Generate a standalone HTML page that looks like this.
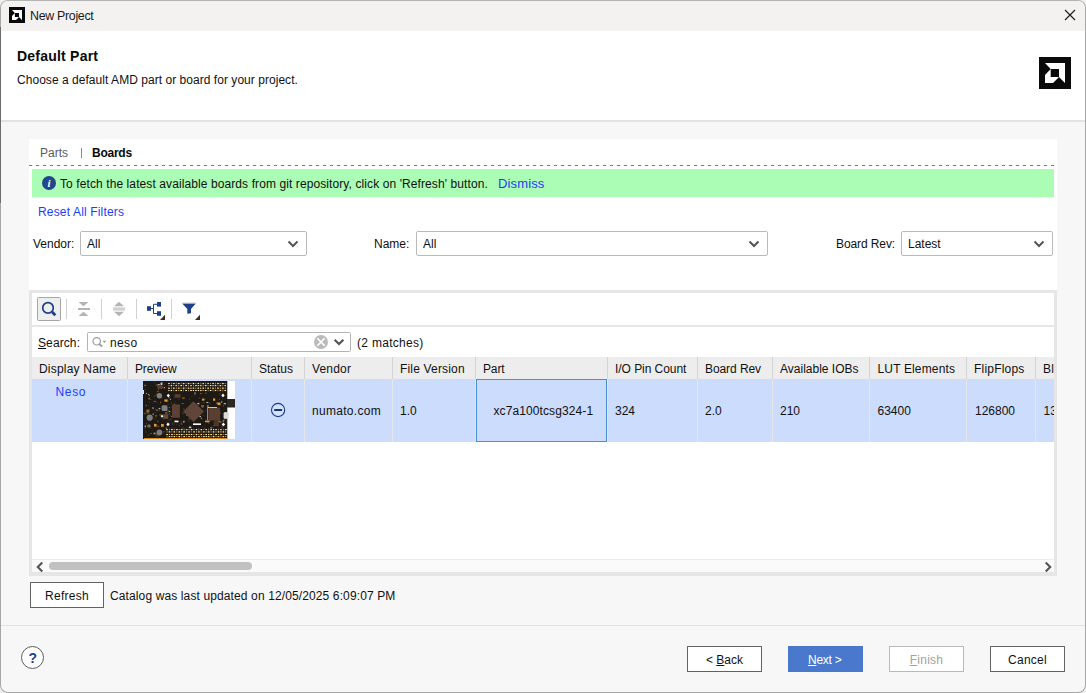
<!DOCTYPE html>
<html lang="en">
<head>
<meta charset="utf-8">
<title>New Project</title>
<style>
html,body{margin:0;padding:0;}
body{width:1086px;height:693px;overflow:hidden;background:#f0f0f0;font-family:"Liberation Sans",sans-serif;font-size:12px;color:#111;}
#win{position:absolute;left:0;top:0;width:1084px;height:691px;border:1px solid #a6a6a6;border-top-color:#b4b4b4;border-radius:8px;background:#f7f7f7;overflow:hidden;}
/* everything inside #win is positioned relative to (1,1); use .abs with page coords minus 1 via wrapper */
#page{position:absolute;left:-1px;top:-1px;width:1086px;height:693px;}
.abs{position:absolute;}
.t{position:absolute;white-space:pre;line-height:14px;height:14px;}
.b{font-weight:bold;}
.link{color:#1b41f8;}
.combo{position:absolute;top:231px;height:23px;border:1px solid #bababa;border-radius:2px;background:#fff;}
.combo .t{left:6px;top:5px;}
.combo svg{position:absolute;right:7px;top:8px;}
.btn{position:absolute;height:24px;border:1px solid #636363;background:#fff;text-align:center;line-height:26px;white-space:pre;overflow:hidden;}
.hd{position:absolute;top:357px;height:22px;background:#ededed;}
.vs{position:absolute;width:1px;background:#d4d4d4;top:357px;height:22px;}
.vr{position:absolute;width:1px;background:#e4e6ea;top:379px;height:63px;}
.tsep{position:absolute;width:1px;background:#d0d0d0;top:299px;height:20px;}
u{text-decoration:underline;text-underline-offset:1px;}
</style>
</head>
<body>
<div id="win"><div id="page">

<!-- title bar -->
<div class="abs" style="left:1px;top:1px;width:1084px;height:30px;background:#f3f2f1;"></div>
<svg class="abs" style="left:9px;top:7px" width="16" height="16" viewBox="0 0 32 32"><rect width="32" height="32" fill="#0a0a0a"/><path d="M6 6H26V26L20 20V12H11.7ZM6 18L11.7 12V20H20L14 26H6Z" fill="#fff"/></svg>
<div class="t" style="left:30px;top:9px;font-size:12.4px;letter-spacing:-0.3px;color:#1a1a1a;">New Project</div>
<svg class="abs" style="left:1064px;top:9px" width="12" height="12" viewBox="0 0 12 12"><path d="M1 1L11 11M11 1L1 11" stroke="#1a1a1a" stroke-width="1.1" fill="none"/></svg>

<!-- header -->
<div class="abs" style="left:1px;top:31px;width:1084px;height:89px;background:#fff;"></div>
<div class="abs" style="left:1px;top:120px;width:1084px;height:2px;background:#e2e2e2;"></div>
<div class="t b" style="left:17px;top:48px;font-size:14px;line-height:16px;height:16px;letter-spacing:0.22px;color:#0a0a0a;">Default Part</div>
<div class="t" style="left:17px;top:73px;letter-spacing:0.04px;">Choose a default AMD part or board for your project.</div>
<svg class="abs" style="left:1039px;top:57px" width="32" height="32" viewBox="0 0 32 32"><rect width="32" height="32" fill="#0a0a0a"/><path d="M6 6H26V26L20 20V12H11.7ZM6 18L11.7 12V20H20L14 26H6Z" fill="#fff"/></svg>

<!-- white panel -->
<div class="abs" style="left:29px;top:139px;width:1028px;height:437px;background:#fff;"></div>

<!-- tabs -->
<div class="t" style="left:40px;top:146px;color:#5c5c5c;">Parts</div>
<div class="abs" style="left:81px;top:148px;width:1px;height:10px;background:#8a8a8a;"></div>
<div class="t b" style="left:92px;top:146px;letter-spacing:-0.25px;color:#0a0a0a;">Boards</div>
<div class="abs" style="left:29px;top:165px;width:1028px;height:1px;background:repeating-linear-gradient(90deg,#787878 0 3px,#eeeeee 3px 4px,transparent 4px 6px,#f2f2f2 6px 7px);"></div>

<!-- banner -->
<div class="abs" style="left:32px;top:169px;width:1022px;height:28px;background:#abfcb4;"></div>
<svg class="abs" style="left:41px;top:175px" width="16" height="16" viewBox="0 0 16 16"><circle cx="8" cy="8" r="7" fill="#21478f"/><text x="8.1" y="11.5" font-family="Liberation Serif,serif" font-size="11" font-weight="bold" font-style="italic" fill="#fff" text-anchor="middle">i</text></svg>
<div class="t" style="left:60px;top:177px;letter-spacing:0.095px;">To fetch the latest available boards from git repository, click on 'Refresh' button.</div>
<div class="t link" style="left:498px;top:177px;font-size:13px;letter-spacing:0.13px;">Dismiss</div>

<div class="t link" style="left:38px;top:205px;letter-spacing:0.16px;">Reset All Filters</div>

<!-- filters -->
<div class="t" style="left:33px;top:237px;">Vendor:</div>
<div class="combo" style="left:80px;width:225px;"><div class="t">All</div><svg width="12" height="8" viewBox="0 0 12 8"><path d="M1.5 1.5L6 6L10.5 1.5" stroke="#555" stroke-width="2" fill="none"/></svg></div>
<div class="t" style="left:374px;top:237px;">Name:</div>
<div class="combo" style="left:416px;width:350px;"><div class="t">All</div><svg width="12" height="8" viewBox="0 0 12 8"><path d="M1.5 1.5L6 6L10.5 1.5" stroke="#555" stroke-width="2" fill="none"/></svg></div>
<div class="t" style="left:836px;top:237px;letter-spacing:-0.1px;">Board Rev:</div>
<div class="combo" style="left:901px;width:150px;"><div class="t">Latest</div><svg width="12" height="8" viewBox="0 0 12 8"><path d="M1.5 1.5L6 6L10.5 1.5" stroke="#555" stroke-width="2" fill="none"/></svg></div>

<!-- table frame -->
<div class="abs" style="left:29px;top:290px;width:1022px;height:280px;border:3px solid #e6e6e6;background:#fff;"></div>
<div class="abs" style="left:32px;top:325px;width:1022px;height:2px;background:#e6e6e6;"></div>
<!-- toolbar -->
<div class="abs" style="left:37px;top:297px;width:22px;height:22px;border:1px solid #a6a6a6;border-radius:1.5px;background:#eeeeee;"></div>
<svg class="abs" style="left:32px;top:293px" width="180" height="32" viewBox="32 293 180 32">
<circle cx="48" cy="307.9" r="5.3" fill="none" stroke="#1c3d8c" stroke-width="1.7"/>
<path d="M52.2 312.1L55.3 315.2" stroke="#1c3d8c" stroke-width="2.8" stroke-linecap="butt"/>
<g fill="#b4b4b4">
<path d="M78.5 302H88.5L83.5 306.2Z"/><rect x="78" y="308" width="12" height="2"/><path d="M78.5 316H88.5L83.5 311.8Z"/>
<path d="M114 306.3H124L119 301.8Z"/><rect x="113" y="307.6" width="12" height="1"/><rect x="113" y="309.4" width="12" height="1"/><path d="M114 311.7H124L119 316.2Z"/>
</g>
<g fill="#1f3f8a">
<rect x="147" y="306.2" width="4" height="4.6"/><rect x="157" y="302" width="4" height="4.6"/><rect x="157" y="311.2" width="4" height="4.6"/>
<path d="M151 308.5H153.5M157 304.3H153.5V313.5H157" stroke="#1f3f8a" stroke-width="1" fill="none"/>
<path d="M182.2 303.4H195.8L191 308.9V313.2L187.3 313.8V308.9Z"/>
</g>
<path d="M182.5 302.9H195.5" stroke="#c4c9d4" stroke-width="0.7"/>
<g fill="#3f2b23"><path d="M165 314.8V320H160Z"/><path d="M200 314.8V320H195Z"/></g>
</svg>
<div class="tsep" style="left:66px;"></div><div class="tsep" style="left:101px;"></div><div class="tsep" style="left:136px;"></div><div class="tsep" style="left:171px;"></div>

<!-- search row -->
<div class="t" style="left:38px;top:336px;letter-spacing:0.1px;"><u>S</u>earch:</div>
<div class="abs" style="left:87px;top:332px;width:262px;height:18px;border:1px solid #b4b4b4;border-radius:1.5px;background:#fff;"></div>
<svg class="abs" style="left:90px;top:334px" width="18" height="16" viewBox="90 334 18 16">
<circle cx="96.7" cy="341.3" r="3.7" fill="none" stroke="#9c9c9c" stroke-width="1.2"/>
<path d="M99.5 344.1L101.5 346.1" stroke="#9c9c9c" stroke-width="1.9" stroke-linecap="round"/>
<path d="M102.5 340.7H106.3L104.4 342.9Z" fill="#9c9c9c"/>
</svg>
<div class="t" style="left:110px;top:336px;letter-spacing:0.35px;">neso</div>
<svg class="abs" style="left:313px;top:334px" width="32" height="16" viewBox="313 334 32 16">
<circle cx="321" cy="342" r="7" fill="#bababa"/>
<path d="M317.3 338.3L324.7 345.7M324.7 338.3L317.3 345.7" stroke="#fff" stroke-width="1.6"/>
<path d="M334.6 339.8L339 344L343.4 339.8" stroke="#555" stroke-width="2.2" fill="none"/>
</svg>
<div class="t" style="left:357px;top:336px;letter-spacing:0.3px;">(2 matches)</div>

<!-- table -->
<div class="abs" style="left:32px;top:357px;width:1022px;height:22px;background:#ededed;"></div>
<div class="abs" style="left:32px;top:379px;width:1022px;height:63px;background:#ccdcfc;"></div>
<div class="vs" style="left:127px;"></div><div class="vr" style="left:127px;"></div><div class="vs" style="left:251px;"></div><div class="vr" style="left:251px;"></div><div class="vs" style="left:304px;"></div><div class="vr" style="left:304px;"></div><div class="vs" style="left:392px;"></div><div class="vr" style="left:392px;"></div><div class="vs" style="left:475px;"></div><div class="vr" style="left:475px;"></div><div class="vs" style="left:607px;"></div><div class="vr" style="left:607px;"></div><div class="vs" style="left:697px;"></div><div class="vr" style="left:697px;"></div><div class="vs" style="left:772px;"></div><div class="vr" style="left:772px;"></div><div class="vs" style="left:869px;"></div><div class="vr" style="left:869px;"></div><div class="vs" style="left:966px;"></div><div class="vr" style="left:966px;"></div><div class="vs" style="left:1035px;"></div><div class="vr" style="left:1035px;"></div>
<div class="abs" style="left:32px;top:357px;width:1022px;height:22px;overflow:hidden;">
<div class="t" style="left:7px;top:5px;letter-spacing:0.2px;">Display Name</div><div class="t" style="left:103px;top:5px;letter-spacing:-0.15px;">Preview</div><div class="t" style="left:227px;top:5px;letter-spacing:0.0px;">Status</div><div class="t" style="left:280px;top:5px;letter-spacing:0.17px;">Vendor</div><div class="t" style="left:368px;top:5px;letter-spacing:0.17px;">File Version</div><div class="t" style="left:451px;top:5px;letter-spacing:-0.15px;">Part</div><div class="t" style="left:583px;top:5px;letter-spacing:-0.05px;">I/O Pin Count</div><div class="t" style="left:673px;top:5px;letter-spacing:-0.08px;">Board Rev</div><div class="t" style="left:748px;top:5px;letter-spacing:0.0px;">Available IOBs</div><div class="t" style="left:845.5px;top:5px;letter-spacing:0.15px;">LUT Elements</div><div class="t" style="left:942px;top:5px;letter-spacing:0.2px;">FlipFlops</div><div class="t" style="left:1011px;top:5px;letter-spacing:0.2px;">Bl</div>
</div>
<div class="abs" style="left:32px;top:379px;width:1022px;height:63px;overflow:hidden;">
<div class="t link" style="left:23.6px;top:6px;letter-spacing:0.6px;">Neso</div><div class="t" style="left:280px;top:25px;letter-spacing:0.3px;">numato.com</div><div class="t" style="left:368px;top:25px;letter-spacing:0px;">1.0</div><div class="t" style="left:461.5px;top:25px;letter-spacing:0.1px;">xc7a100tcsg324-1</div><div class="t" style="left:583px;top:25px;letter-spacing:0px;">324</div><div class="t" style="left:673px;top:25px;letter-spacing:0px;">2.0</div><div class="t" style="left:748px;top:25px;letter-spacing:0px;">210</div><div class="t" style="left:845.5px;top:25px;letter-spacing:0px;">63400</div><div class="t" style="left:943px;top:25px;letter-spacing:0px;">126800</div><div class="t" style="left:1011.5px;top:25px;letter-spacing:0px;">13</div>
</div>
<div class="abs" style="left:476px;top:379px;width:129px;height:61px;border:1px solid #4a8fd6;"></div>
<svg class="abs" style="left:270px;top:402px" width="16" height="16" viewBox="0 0 16 16"><circle cx="8.1" cy="8" r="6.6" fill="#d5e3fd" stroke="#173c8c" stroke-width="1.1"/><rect x="4.1" y="7" width="8" height="2" rx="0.5" fill="#10357f"/></svg>
<svg class="abs" style="left:143px;top:381px" width="92" height="58" viewBox="0 0 92 58">
<defs>
</defs>
<rect width="92" height="58" fill="#fff"/>
<rect x="0" y="0" width="84.3" height="58" fill="#1d1914"/>
<g opacity="0.85"><rect x="51.9" y="42.4" width="2.2" height="1.5" fill="#5a4330"/><rect x="69.8" y="44.3" width="1" height="0.8" fill="#a06a28"/><rect x="9.8" y="27.0" width="1" height="1.2" fill="#6a4a3b"/><rect x="18.4" y="16.3" width="1.3" height="1" fill="#4a4038"/><rect x="11.9" y="35.4" width="1" height="1" fill="#5a4330"/><rect x="14.2" y="9.9" width="1" height="1" fill="#c8842c"/><rect x="15.5" y="55.2" width="1" height="1.2" fill="#3a332c"/><rect x="2.3" y="23.9" width="1" height="1" fill="#4a4038"/><rect x="27.9" y="46.7" width="1.6" height="0.8" fill="#4a4038"/><rect x="5.9" y="20.6" width="1" height="1.2" fill="#4a4038"/><rect x="15.7" y="27.2" width="1" height="0.8" fill="#ffffff"/><rect x="2.0" y="45.0" width="1" height="1.2" fill="#5a4330"/><rect x="37.9" y="40.5" width="1.6" height="1" fill="#6a4a3b"/><rect x="78.2" y="20.0" width="1" height="1.5" fill="#ffffff"/><rect x="62.2" y="45.5" width="1" height="0.8" fill="#2e2a26"/><rect x="28.6" y="35.0" width="1" height="1" fill="#ffffff"/><rect x="76.7" y="31.3" width="1" height="1" fill="#3a332c"/><rect x="15.1" y="4.9" width="1" height="1" fill="#d8d8d8"/><rect x="13.8" y="3.2" width="1.6" height="1.5" fill="#6a5a4a"/><rect x="3.1" y="42.3" width="1" height="1" fill="#7a5a3c"/><rect x="81.3" y="36.6" width="1.3" height="1" fill="#c8842c"/><rect x="11.3" y="41.8" width="1" height="1.2" fill="#6a4a3b"/><rect x="14.4" y="21.6" width="0.8" height="1.2" fill="#3a332c"/><rect x="12.1" y="52.6" width="1.6" height="1" fill="#7a5a3c"/><rect x="79.7" y="39.4" width="1" height="1.2" fill="#ffffff"/><rect x="24.5" y="23.3" width="1" height="0.8" fill="#6a5a4a"/><rect x="68.3" y="30.5" width="1" height="1.2" fill="#4a4038"/><rect x="15.4" y="28.3" width="1.6" height="1.5" fill="#5a4330"/><rect x="5.7" y="45.4" width="1" height="1.5" fill="#3a332c"/><rect x="63.2" y="21.0" width="2.2" height="1" fill="#d8d8d8"/><rect x="70.8" y="27.3" width="1" height="1" fill="#ffffff"/><rect x="38.7" y="46.6" width="2.2" height="1" fill="#5a4330"/><rect x="23.1" y="20.0" width="1.3" height="1" fill="#a06a28"/><rect x="72.3" y="39.4" width="1" height="1" fill="#8a8a8a"/><rect x="39.9" y="39.6" width="2.2" height="1.2" fill="#a06a28"/><rect x="25.5" y="31.8" width="2.2" height="1" fill="#5a4330"/><rect x="16.6" y="33.6" width="1.6" height="1" fill="#e8a030"/><rect x="80.4" y="27.8" width="1.6" height="0.8" fill="#2e2a26"/><rect x="38.9" y="22.0" width="1.6" height="0.8" fill="#c8842c"/><rect x="20.1" y="51.5" width="0.8" height="1" fill="#6a5a4a"/><rect x="72.0" y="39.4" width="1.6" height="1" fill="#3a332c"/><rect x="45.9" y="17.5" width="1" height="1.5" fill="#4a4038"/><rect x="79.0" y="17.1" width="1" height="1" fill="#2e2a26"/><rect x="34.3" y="32.4" width="1.6" height="1" fill="#7a5a3c"/><rect x="12.2" y="34.2" width="1.6" height="1.2" fill="#c8842c"/><rect x="80.4" y="34.9" width="1" height="0.8" fill="#6a5a4a"/><rect x="9.4" y="32.5" width="1.6" height="1.5" fill="#8a8a8a"/><rect x="47.1" y="24.7" width="1" height="1.2" fill="#3a332c"/><rect x="40.1" y="40.5" width="1.3" height="1" fill="#ffffff"/><rect x="61.6" y="17.5" width="1" height="1.2" fill="#5a4330"/><rect x="41.1" y="16.7" width="1.3" height="0.8" fill="#6a4a3b"/><rect x="20.8" y="2.8" width="1" height="1.2" fill="#5a4330"/><rect x="40.1" y="32.2" width="1" height="1.2" fill="#3a332c"/><rect x="20.8" y="15.6" width="1" height="1" fill="#3a332c"/><rect x="1.8" y="7.6" width="1" height="1.5" fill="#4a4038"/><rect x="51.1" y="41.8" width="0.8" height="1.2" fill="#5a4330"/><rect x="30.3" y="42.6" width="1.6" height="1" fill="#3a332c"/><rect x="0.7" y="31.8" width="2.2" height="0.8" fill="#c8842c"/><rect x="1.7" y="44.5" width="1.3" height="1.5" fill="#d8d8d8"/><rect x="39.7" y="39.1" width="2.2" height="1" fill="#3a332c"/><rect x="38.9" y="43.3" width="1" height="0.8" fill="#2e2a26"/><rect x="48.5" y="37.1" width="1.3" height="1" fill="#8a8a8a"/><rect x="14.1" y="39.8" width="1.3" height="1" fill="#8a8a8a"/><rect x="35.6" y="31.1" width="0.8" height="0.8" fill="#e8a030"/><rect x="22.5" y="5.3" width="0.8" height="0.8" fill="#4a4038"/><rect x="82.9" y="40.1" width="0.8" height="0.8" fill="#6a4a3b"/><rect x="18.6" y="37.0" width="0.8" height="1" fill="#3a332c"/><rect x="58.7" y="25.2" width="1" height="1.5" fill="#a06a28"/><rect x="9.4" y="21.9" width="0.8" height="1" fill="#3a332c"/><rect x="33.4" y="35.7" width="0.8" height="1.2" fill="#4a4038"/><rect x="26.5" y="34.4" width="1.3" height="1" fill="#5a4330"/><rect x="24.8" y="32.6" width="2.2" height="1.5" fill="#3a332c"/><rect x="75.6" y="31.9" width="1.6" height="1" fill="#ffffff"/><rect x="5.7" y="13.8" width="1" height="1.5" fill="#8a8a8a"/><rect x="37.9" y="22.5" width="1" height="0.8" fill="#4a4038"/><rect x="7.5" y="38.2" width="0.8" height="0.8" fill="#7a5a3c"/><rect x="20.2" y="50.0" width="1.3" height="1" fill="#6a4a3b"/><rect x="12.9" y="54.3" width="2.2" height="1" fill="#6a4a3b"/><rect x="7.4" y="52.0" width="1.3" height="1" fill="#8a8a8a"/><rect x="58.4" y="21.7" width="1" height="1" fill="#4a4038"/><rect x="77.3" y="40.4" width="1.3" height="1.2" fill="#8a8a8a"/><rect x="60.1" y="20.7" width="1" height="1.2" fill="#5a4330"/><rect x="43.2" y="34.0" width="1.6" height="1" fill="#a06a28"/><rect x="3.2" y="11.9" width="0.8" height="1.2" fill="#d8d8d8"/><rect x="55.1" y="20.2" width="1.3" height="1.2" fill="#3a332c"/><rect x="73.9" y="35.5" width="1.3" height="1" fill="#7a5a3c"/><rect x="39.2" y="31.7" width="0.8" height="1" fill="#a06a28"/><rect x="62.4" y="38.5" width="0.8" height="1.2" fill="#3a332c"/><rect x="28.9" y="43.0" width="1" height="0.8" fill="#5a4330"/><rect x="56.1" y="27.2" width="1" height="0.8" fill="#4a4038"/><rect x="24.5" y="38.6" width="2.2" height="1" fill="#3a332c"/><rect x="17.1" y="1.9" width="1" height="0.8" fill="#6a5a4a"/><rect x="75.7" y="40.4" width="2.2" height="1" fill="#a06a28"/><rect x="39.1" y="16.5" width="2.2" height="1.2" fill="#a06a28"/><rect x="17.7" y="3.0" width="1.6" height="1.2" fill="#ffffff"/><rect x="1.0" y="3.9" width="2.2" height="1.2" fill="#a06a28"/><rect x="4.2" y="31.5" width="1.6" height="1.5" fill="#5a4330"/><rect x="78.0" y="41.0" width="1" height="1.2" fill="#4a4038"/><rect x="20.6" y="3.4" width="1.3" height="0.8" fill="#3a332c"/><rect x="21.6" y="23.5" width="1" height="0.8" fill="#3a332c"/><rect x="57.9" y="36.7" width="1" height="1.5" fill="#e8a030"/><rect x="7.5" y="18.2" width="0.8" height="0.8" fill="#a06a28"/><rect x="18.2" y="1.5" width="1.6" height="1" fill="#d8d8d8"/><rect x="35.4" y="43.9" width="1.6" height="1" fill="#5a4330"/><rect x="75.8" y="17.9" width="1.3" height="1" fill="#6a4a3b"/><rect x="11.9" y="27.8" width="1" height="1.2" fill="#4a4038"/><rect x="11.4" y="30.8" width="1.3" height="1" fill="#4a4038"/><rect x="55.5" y="16.1" width="1.3" height="1" fill="#3a332c"/><rect x="58.5" y="45.5" width="1" height="0.8" fill="#4a4038"/><rect x="35.2" y="18.2" width="1.6" height="0.8" fill="#3a332c"/><rect x="54.5" y="43.4" width="1.6" height="0.8" fill="#7a5a3c"/><rect x="12.3" y="39.3" width="0.8" height="0.8" fill="#2e2a26"/><rect x="22.6" y="46.4" width="1.3" height="1.5" fill="#8a8a8a"/><rect x="27.0" y="17.8" width="1" height="1" fill="#d8d8d8"/><rect x="56.3" y="16.6" width="0.8" height="1.5" fill="#5a4330"/><rect x="2.8" y="3.4" width="1" height="1" fill="#2e2a26"/><rect x="51.0" y="13.6" width="1.3" height="1" fill="#5a4330"/><rect x="17.1" y="20.7" width="1" height="1.5" fill="#a06a28"/><rect x="59.0" y="25.7" width="1.3" height="1.2" fill="#6a4a3b"/><rect x="28.0" y="25.7" width="1" height="1.2" fill="#2e2a26"/><rect x="14.7" y="3.2" width="2.2" height="1" fill="#d8d8d8"/><rect x="80.5" y="34.2" width="0.8" height="1" fill="#2e2a26"/><rect x="57.1" y="12.2" width="0.8" height="0.8" fill="#e8a030"/><rect x="32.9" y="12.7" width="1" height="1" fill="#3a332c"/><rect x="46.9" y="20.7" width="1" height="1" fill="#5a4330"/><rect x="67.2" y="46.5" width="2.2" height="0.8" fill="#d8d8d8"/><rect x="69.1" y="28.2" width="0.8" height="0.8" fill="#a06a28"/><rect x="33.3" y="43.1" width="1" height="1" fill="#4a4038"/><rect x="39.9" y="27.1" width="1.6" height="1.5" fill="#4a4038"/><rect x="66.5" y="21.8" width="0.8" height="0.8" fill="#a06a28"/><rect x="56.4" y="35.0" width="1.6" height="1.2" fill="#d8d8d8"/><rect x="45.5" y="39.5" width="1.3" height="1.5" fill="#3a332c"/><rect x="44.8" y="45.6" width="1" height="1.5" fill="#5a4330"/><rect x="56.6" y="30.0" width="1" height="1" fill="#4a4038"/><rect x="2.8" y="44.2" width="1.6" height="1.5" fill="#2e2a26"/><rect x="23.2" y="41.0" width="0.8" height="0.8" fill="#4a4038"/><rect x="74.5" y="39.4" width="2.2" height="1.5" fill="#c8842c"/><rect x="10.5" y="19.8" width="1.6" height="1.2" fill="#6a5a4a"/><rect x="80.4" y="38.4" width="1.3" height="1" fill="#c8842c"/><rect x="75.6" y="35.2" width="1.3" height="1" fill="#6a4a3b"/><rect x="21.0" y="6.2" width="1" height="1" fill="#ffffff"/><rect x="54.6" y="32.7" width="2.2" height="1.5" fill="#2e2a26"/><rect x="34.9" y="24.5" width="1.6" height="1.5" fill="#e8a030"/><rect x="25.4" y="16.4" width="1.6" height="1" fill="#a06a28"/><rect x="24.9" y="31.9" width="1.6" height="1" fill="#2e2a26"/><rect x="16.2" y="34.1" width="2.2" height="1" fill="#4a4038"/><rect x="5.6" y="27.9" width="1.6" height="0.8" fill="#4a4038"/><rect x="16.1" y="26.9" width="1.3" height="1" fill="#d8d8d8"/><rect x="28.2" y="21.3" width="0.8" height="1.5" fill="#7a5a3c"/><rect x="61.2" y="46.6" width="1" height="1.5" fill="#6a4a3b"/><rect x="30.6" y="46.5" width="1" height="1" fill="#4a4038"/><rect x="31.4" y="26.4" width="2.2" height="0.8" fill="#e8a030"/><rect x="33.8" y="31.2" width="1.3" height="0.8" fill="#6a4a3b"/><rect x="11.5" y="0.7" width="1.3" height="1" fill="#4a4038"/><rect x="62.5" y="11.5" width="1" height="1.2" fill="#8a8a8a"/><rect x="24.5" y="28.7" width="2.2" height="0.8" fill="#6a4a3b"/><rect x="24.9" y="19.5" width="0.8" height="1.5" fill="#2e2a26"/><rect x="4.7" y="24.3" width="1" height="1" fill="#4a4038"/><rect x="12.5" y="55.2" width="1.6" height="1.2" fill="#2e2a26"/><rect x="81.7" y="31.1" width="1.3" height="1" fill="#4a4038"/><rect x="7.4" y="46.7" width="1" height="1" fill="#5a4330"/><rect x="2.3" y="32.3" width="1.3" height="1.5" fill="#4a4038"/><rect x="4.9" y="12.9" width="1.3" height="0.8" fill="#d8d8d8"/><rect x="13.7" y="44.1" width="1.6" height="1.2" fill="#3a332c"/><rect x="18.3" y="24.3" width="2.2" height="1.2" fill="#2e2a26"/><rect x="76.0" y="21.9" width="1" height="1" fill="#8a8a8a"/><rect x="31.0" y="22.7" width="1" height="1" fill="#8a8a8a"/><rect x="39.3" y="16.7" width="2.2" height="0.8" fill="#a06a28"/><rect x="54.0" y="42.7" width="1.3" height="1" fill="#7a5a3c"/><rect x="11.7" y="13.9" width="1" height="1.5" fill="#5a4330"/><rect x="1.7" y="46.4" width="0.8" height="1" fill="#8a8a8a"/><rect x="62.7" y="21.6" width="1" height="1" fill="#3a332c"/><rect x="9.7" y="36.9" width="1" height="1" fill="#5a4330"/><rect x="75.3" y="31.4" width="1.3" height="1" fill="#8a8a8a"/><rect x="22.2" y="31.3" width="2.2" height="1.2" fill="#8a8a8a"/><rect x="20.1" y="38.1" width="0.8" height="0.8" fill="#5a4330"/><rect x="64.1" y="24.2" width="1.6" height="1.5" fill="#e8a030"/><rect x="32.3" y="20.0" width="0.8" height="1.5" fill="#3a332c"/><rect x="10.7" y="51.7" width="1.6" height="1.5" fill="#ffffff"/><rect x="37.5" y="42.1" width="1.6" height="1.5" fill="#6a5a4a"/><rect x="8.6" y="29.5" width="1.6" height="1" fill="#2e2a26"/><rect x="11.9" y="20.3" width="1.3" height="0.8" fill="#c8842c"/><rect x="73.5" y="21.6" width="1" height="1" fill="#ffffff"/><rect x="10.8" y="14.7" width="0.8" height="1" fill="#6a5a4a"/><rect x="14.2" y="45.1" width="2.2" height="1" fill="#7a5a3c"/><rect x="49.5" y="32.5" width="2.2" height="1" fill="#6a4a3b"/><rect x="1.3" y="2.9" width="1.6" height="1.2" fill="#3a332c"/><rect x="2.6" y="23.7" width="1.3" height="1.5" fill="#7a5a3c"/><rect x="51.0" y="13.0" width="2.2" height="0.8" fill="#4a4038"/><rect x="59.8" y="33.9" width="0.8" height="0.8" fill="#7a5a3c"/><rect x="25.6" y="30.1" width="1.6" height="0.8" fill="#ffffff"/><rect x="10.4" y="43.1" width="1" height="1.2" fill="#3a332c"/><rect x="27.1" y="37.7" width="1.3" height="1.2" fill="#6a5a4a"/><rect x="13.3" y="12.7" width="1" height="1" fill="#c8842c"/><rect x="82.5" y="36.7" width="1.3" height="1.5" fill="#6a5a4a"/><rect x="14.9" y="8.3" width="1.3" height="1" fill="#7a5a3c"/><rect x="77.7" y="19.9" width="0.8" height="1" fill="#2e2a26"/><rect x="22.6" y="28.4" width="1.6" height="1" fill="#e8a030"/><rect x="55.1" y="24.2" width="1" height="1" fill="#3a332c"/><rect x="51.4" y="11.6" width="1.3" height="1" fill="#ffffff"/><rect x="40.7" y="40.6" width="0.8" height="0.8" fill="#6a4a3b"/><rect x="80.7" y="22.2" width="2.2" height="1" fill="#ffffff"/><rect x="8.7" y="49.0" width="0.8" height="1" fill="#4a4038"/><rect x="24.6" y="19.5" width="1.3" height="0.8" fill="#4a4038"/><rect x="78.3" y="45.2" width="1.6" height="1.2" fill="#6a4a3b"/><rect x="45.1" y="37.3" width="2.2" height="1.5" fill="#4a4038"/><rect x="81.9" y="31.2" width="1.3" height="0.8" fill="#ffffff"/><rect x="25.8" y="26.1" width="1.3" height="0.8" fill="#c8842c"/><rect x="11.5" y="37.6" width="1" height="1" fill="#4a4038"/><rect x="73.2" y="40.7" width="0.8" height="1" fill="#3a332c"/><rect x="4.9" y="53.6" width="1.3" height="1" fill="#7a5a3c"/><rect x="46.1" y="45.6" width="2.2" height="1.5" fill="#ffffff"/><rect x="23.9" y="42.5" width="1" height="1.2" fill="#d8d8d8"/><rect x="33.8" y="40.6" width="0.8" height="1" fill="#c8842c"/><rect x="63.9" y="25.7" width="1" height="1" fill="#e8a030"/><rect x="14.3" y="5.6" width="1.3" height="1" fill="#7a5a3c"/><rect x="48.4" y="14.7" width="1" height="0.8" fill="#6a4a3b"/><rect x="17.5" y="1.8" width="1.6" height="1.5" fill="#d8d8d8"/><rect x="53.2" y="28.1" width="1.6" height="1.5" fill="#3a332c"/><rect x="24.3" y="30.1" width="1" height="1.2" fill="#5a4330"/><rect x="54.5" y="43.3" width="2.2" height="0.8" fill="#5a4330"/><rect x="80.0" y="24.1" width="1" height="1.2" fill="#7a5a3c"/><rect x="28.5" y="41.8" width="1.6" height="1" fill="#5a4330"/><rect x="13.6" y="28.4" width="0.8" height="1.5" fill="#d8d8d8"/><rect x="4.1" y="30.7" width="1.3" height="0.8" fill="#c8842c"/><rect x="14.4" y="10.2" width="1.6" height="1" fill="#6a5a4a"/><rect x="54.2" y="22.2" width="2.2" height="1" fill="#ffffff"/><rect x="76.4" y="12.1" width="1" height="1.5" fill="#4a4038"/><rect x="61.8" y="29.0" width="1.3" height="1.5" fill="#3a332c"/><rect x="18.9" y="5.8" width="1.6" height="1.5" fill="#7a5a3c"/><rect x="65.2" y="41.6" width="1" height="1.5" fill="#5a4330"/><rect x="12.7" y="3.7" width="0.8" height="1" fill="#c8842c"/><rect x="9.3" y="26.4" width="1.3" height="1.2" fill="#d8d8d8"/><rect x="64.0" y="40.0" width="1.6" height="1.5" fill="#7a5a3c"/><rect x="69.4" y="35.2" width="2.2" height="1.5" fill="#c8842c"/><rect x="2.2" y="50.5" width="1.6" height="1" fill="#4a4038"/><rect x="58.0" y="11.9" width="1.6" height="1" fill="#4a4038"/><rect x="14.7" y="22.9" width="0.8" height="1.2" fill="#3a332c"/><rect x="25.3" y="41.7" width="1.3" height="1.2" fill="#a06a28"/><rect x="11.4" y="51.4" width="1" height="1.2" fill="#5a4330"/></g>
<rect x="84" y="18" width="8" height="8.5" fill="#2b2620"/>
<rect x="0" y="9" width="1" height="4" fill="#e8e8f0"/>
<g><rect x="24.95" y="1.90" width="1.6" height="1.2" fill="#c88a2c"/><rect x="25.45" y="2.00" width="1.25" height="1" fill="#ffe890"/><rect x="27.95" y="1.60" width="0.8" height="1.7" fill="#9a9284"/><rect x="29.85" y="1.90" width="1.6" height="1.2" fill="#c88a2c"/><rect x="30.35" y="2.00" width="1.25" height="1" fill="#fff2b4"/><rect x="32.85" y="1.60" width="0.8" height="1.7" fill="#9a9284"/><rect x="34.75" y="1.90" width="1.6" height="1.2" fill="#c88a2c"/><rect x="35.25" y="2.00" width="1.25" height="1" fill="#ffe890"/><rect x="37.75" y="1.60" width="0.8" height="1.7" fill="#9a9284"/><rect x="39.65" y="1.90" width="1.6" height="1.2" fill="#c88a2c"/><rect x="40.15" y="2.00" width="1.25" height="1" fill="#fff2b4"/><rect x="42.65" y="1.60" width="0.8" height="1.7" fill="#9a9284"/><rect x="44.55" y="1.90" width="1.6" height="1.2" fill="#c88a2c"/><rect x="45.05" y="2.00" width="1.25" height="1" fill="#fff2b4"/><rect x="47.35" y="1.95" width="1.05" height="1.05" fill="#e8a234"/><rect x="49.45" y="1.90" width="1.6" height="1.2" fill="#c88a2c"/><rect x="49.95" y="2.00" width="1.25" height="1" fill="#fff2b4"/><rect x="52.25" y="1.95" width="1.05" height="1.05" fill="#c88428"/><rect x="54.35" y="1.90" width="1.6" height="1.2" fill="#c88a2c"/><rect x="54.85" y="2.00" width="1.25" height="1" fill="#ffe890"/><rect x="57.35" y="1.60" width="0.8" height="1.7" fill="#9a9284"/><rect x="59.25" y="1.90" width="1.6" height="1.2" fill="#c88a2c"/><rect x="59.75" y="2.00" width="1.25" height="1" fill="#fbd978"/><rect x="62.25" y="1.60" width="0.8" height="1.7" fill="#9a9284"/><rect x="64.15" y="1.90" width="1.6" height="1.2" fill="#c88a2c"/><rect x="64.65" y="2.00" width="1.25" height="1" fill="#fbd978"/><rect x="66.95" y="1.95" width="1.05" height="1.05" fill="#d89028"/><rect x="69.05" y="1.90" width="1.6" height="1.2" fill="#c88a2c"/><rect x="69.55" y="2.00" width="1.25" height="1" fill="#ffe890"/><rect x="72.05" y="1.60" width="0.8" height="1.7" fill="#9a9284"/><rect x="73.95" y="1.90" width="1.6" height="1.2" fill="#c88a2c"/><rect x="74.45" y="2.00" width="1.25" height="1" fill="#fff2b4"/><rect x="76.75" y="1.95" width="1.05" height="1.05" fill="#d89028"/><rect x="78.85" y="1.90" width="1.6" height="1.2" fill="#c88a2c"/><rect x="79.35" y="2.00" width="1.25" height="1" fill="#fff8d8"/><rect x="81.65" y="1.95" width="1.05" height="1.05" fill="#c88428"/><rect x="25.30" y="4.05" width="1.05" height="1.05" fill="#c88428"/><rect x="27.40" y="4.00" width="1.6" height="1.2" fill="#c88a2c"/><rect x="27.90" y="4.10" width="1.25" height="1" fill="#ffe890"/><rect x="30.20" y="4.05" width="1.05" height="1.05" fill="#d89028"/><rect x="32.30" y="4.00" width="1.6" height="1.2" fill="#c88a2c"/><rect x="32.80" y="4.10" width="1.25" height="1" fill="#fbd978"/><rect x="35.30" y="3.70" width="0.8" height="1.7" fill="#9a9284"/><rect x="37.20" y="4.00" width="1.6" height="1.2" fill="#c88a2c"/><rect x="37.70" y="4.10" width="1.25" height="1" fill="#fff8d8"/><rect x="40.20" y="3.70" width="0.8" height="1.7" fill="#9a9284"/><rect x="42.10" y="4.00" width="1.6" height="1.2" fill="#c88a2c"/><rect x="42.60" y="4.10" width="1.25" height="1" fill="#fff2b4"/><rect x="45.10" y="3.70" width="0.8" height="1.7" fill="#9a9284"/><rect x="47.00" y="4.00" width="1.6" height="1.2" fill="#c88a2c"/><rect x="47.50" y="4.10" width="1.25" height="1" fill="#fbd978"/><rect x="50.00" y="3.70" width="0.8" height="1.7" fill="#9a9284"/><rect x="51.90" y="4.00" width="1.6" height="1.2" fill="#c88a2c"/><rect x="52.40" y="4.10" width="1.25" height="1" fill="#fff2b4"/><rect x="54.75" y="4.05" width="1.1" height="1.1" fill="#ffffff"/><rect x="56.80" y="4.00" width="1.6" height="1.2" fill="#c88a2c"/><rect x="57.30" y="4.10" width="1.25" height="1" fill="#fbd978"/><rect x="59.80" y="3.70" width="0.8" height="1.7" fill="#9a9284"/><rect x="61.70" y="4.00" width="1.6" height="1.2" fill="#c88a2c"/><rect x="62.20" y="4.10" width="1.25" height="1" fill="#fff8d8"/><rect x="64.50" y="4.05" width="1.05" height="1.05" fill="#c88428"/><rect x="66.60" y="4.00" width="1.6" height="1.2" fill="#c88a2c"/><rect x="67.10" y="4.10" width="1.25" height="1" fill="#fff2b4"/><rect x="69.45" y="4.05" width="1.1" height="1.1" fill="#ffffff"/><rect x="71.50" y="4.00" width="1.6" height="1.2" fill="#c88a2c"/><rect x="72.00" y="4.10" width="1.25" height="1" fill="#fff2b4"/><rect x="74.50" y="3.70" width="0.8" height="1.7" fill="#9a9284"/><rect x="76.40" y="4.00" width="1.6" height="1.2" fill="#c88a2c"/><rect x="76.90" y="4.10" width="1.25" height="1" fill="#fff8d8"/><rect x="79.40" y="3.70" width="0.8" height="1.7" fill="#9a9284"/><rect x="81.30" y="4.00" width="1.6" height="1.2" fill="#c88a2c"/><rect x="81.80" y="4.10" width="1.25" height="1" fill="#fbd978"/><rect x="24.95" y="6.60" width="1.6" height="1.2" fill="#c88a2c"/><rect x="25.45" y="6.70" width="1.25" height="1" fill="#fff8d8"/><rect x="27.95" y="6.30" width="0.8" height="1.7" fill="#9a9284"/><rect x="29.85" y="6.60" width="1.6" height="1.2" fill="#c88a2c"/><rect x="30.35" y="6.70" width="1.25" height="1" fill="#fff8d8"/><rect x="32.85" y="6.30" width="0.8" height="1.7" fill="#9a9284"/><rect x="34.75" y="6.60" width="1.6" height="1.2" fill="#c88a2c"/><rect x="35.25" y="6.70" width="1.25" height="1" fill="#ffe890"/><rect x="37.55" y="6.65" width="1.05" height="1.05" fill="#c88428"/><rect x="39.65" y="6.60" width="1.6" height="1.2" fill="#c88a2c"/><rect x="40.15" y="6.70" width="1.25" height="1" fill="#fff8d8"/><rect x="42.65" y="6.30" width="0.8" height="1.7" fill="#9a9284"/><rect x="44.55" y="6.60" width="1.6" height="1.2" fill="#c88a2c"/><rect x="45.05" y="6.70" width="1.25" height="1" fill="#fbd978"/><rect x="47.40" y="6.65" width="1.1" height="1.1" fill="#ffffff"/><rect x="49.45" y="6.60" width="1.6" height="1.2" fill="#c88a2c"/><rect x="49.95" y="6.70" width="1.25" height="1" fill="#fbd978"/><rect x="52.25" y="6.65" width="1.05" height="1.05" fill="#f0b648"/><rect x="54.35" y="6.60" width="1.6" height="1.2" fill="#c88a2c"/><rect x="54.85" y="6.70" width="1.25" height="1" fill="#fff8d8"/><rect x="57.20" y="6.65" width="1.1" height="1.1" fill="#ffffff"/><rect x="59.25" y="6.60" width="1.6" height="1.2" fill="#c88a2c"/><rect x="59.75" y="6.70" width="1.25" height="1" fill="#ffe890"/><rect x="62.25" y="6.30" width="0.8" height="1.7" fill="#9a9284"/><rect x="64.15" y="6.60" width="1.6" height="1.2" fill="#c88a2c"/><rect x="64.65" y="6.70" width="1.25" height="1" fill="#fff2b4"/><rect x="67.15" y="6.30" width="0.8" height="1.7" fill="#9a9284"/><rect x="69.05" y="6.60" width="1.6" height="1.2" fill="#c88a2c"/><rect x="69.55" y="6.70" width="1.25" height="1" fill="#fbd978"/><rect x="72.05" y="6.30" width="0.8" height="1.7" fill="#9a9284"/><rect x="73.95" y="6.60" width="1.6" height="1.2" fill="#c88a2c"/><rect x="74.45" y="6.70" width="1.25" height="1" fill="#fbd978"/><rect x="76.75" y="6.65" width="1.05" height="1.05" fill="#f0b648"/><rect x="78.85" y="6.60" width="1.6" height="1.2" fill="#c88a2c"/><rect x="79.35" y="6.70" width="1.25" height="1" fill="#fff2b4"/><rect x="81.85" y="6.30" width="0.8" height="1.7" fill="#9a9284"/><rect x="25.35" y="8.95" width="1.1" height="1.1" fill="#ffffff"/><rect x="27.40" y="8.90" width="1.6" height="1.2" fill="#c88a2c"/><rect x="27.90" y="9.00" width="1.25" height="1" fill="#fff8d8"/><rect x="30.40" y="8.60" width="0.8" height="1.7" fill="#9a9284"/><rect x="32.30" y="8.90" width="1.6" height="1.2" fill="#c88a2c"/><rect x="32.80" y="9.00" width="1.25" height="1" fill="#fff8d8"/><rect x="35.10" y="8.95" width="1.05" height="1.05" fill="#e8a234"/><rect x="37.20" y="8.90" width="1.6" height="1.2" fill="#c88a2c"/><rect x="37.70" y="9.00" width="1.25" height="1" fill="#ffe890"/><rect x="40.20" y="8.60" width="0.8" height="1.7" fill="#9a9284"/><rect x="42.10" y="8.90" width="1.6" height="1.2" fill="#c88a2c"/><rect x="42.60" y="9.00" width="1.25" height="1" fill="#fff2b4"/><rect x="45.10" y="8.60" width="0.8" height="1.7" fill="#9a9284"/><rect x="47.00" y="8.90" width="1.6" height="1.2" fill="#c88a2c"/><rect x="47.50" y="9.00" width="1.25" height="1" fill="#fff2b4"/><rect x="49.85" y="8.95" width="1.1" height="1.1" fill="#ffffff"/><rect x="51.90" y="8.90" width="1.6" height="1.2" fill="#c88a2c"/><rect x="52.40" y="9.00" width="1.25" height="1" fill="#fff2b4"/><rect x="54.75" y="8.95" width="1.1" height="1.1" fill="#ffffff"/><rect x="56.80" y="8.90" width="1.6" height="1.2" fill="#c88a2c"/><rect x="57.30" y="9.00" width="1.25" height="1" fill="#ffe890"/><rect x="59.60" y="8.95" width="1.05" height="1.05" fill="#f0b648"/><rect x="61.70" y="8.90" width="1.6" height="1.2" fill="#c88a2c"/><rect x="62.20" y="9.00" width="1.25" height="1" fill="#fff8d8"/><rect x="64.70" y="8.60" width="0.8" height="1.7" fill="#9a9284"/><rect x="66.60" y="8.90" width="1.6" height="1.2" fill="#c88a2c"/><rect x="67.10" y="9.00" width="1.25" height="1" fill="#fff8d8"/><rect x="69.60" y="8.60" width="0.8" height="1.7" fill="#9a9284"/><rect x="71.50" y="8.90" width="1.6" height="1.2" fill="#c88a2c"/><rect x="72.00" y="9.00" width="1.25" height="1" fill="#ffe890"/><rect x="74.50" y="8.60" width="0.8" height="1.7" fill="#9a9284"/><rect x="76.40" y="8.90" width="1.6" height="1.2" fill="#c88a2c"/><rect x="76.90" y="9.00" width="1.25" height="1" fill="#fbd978"/><rect x="79.40" y="8.60" width="0.8" height="1.7" fill="#9a9284"/><rect x="81.30" y="8.90" width="1.6" height="1.2" fill="#c88a2c"/><rect x="81.80" y="9.00" width="1.25" height="1" fill="#fff2b4"/></g>
<g><rect x="23.05" y="48.00" width="1.6" height="1.2" fill="#c88a2c"/><rect x="23.55" y="48.10" width="1.25" height="1" fill="#fbd978"/><rect x="26.05" y="47.70" width="0.8" height="1.7" fill="#9a9284"/><rect x="27.95" y="48.00" width="1.6" height="1.2" fill="#c88a2c"/><rect x="28.45" y="48.10" width="1.25" height="1" fill="#fff2b4"/><rect x="30.75" y="48.05" width="1.05" height="1.05" fill="#f0b648"/><rect x="32.85" y="48.00" width="1.6" height="1.2" fill="#c88a2c"/><rect x="33.35" y="48.10" width="1.25" height="1" fill="#fff2b4"/><rect x="35.65" y="48.05" width="1.05" height="1.05" fill="#f0b648"/><rect x="37.75" y="48.00" width="1.6" height="1.2" fill="#c88a2c"/><rect x="38.25" y="48.10" width="1.25" height="1" fill="#ffe890"/><rect x="40.75" y="47.70" width="0.8" height="1.7" fill="#9a9284"/><rect x="42.65" y="48.00" width="1.6" height="1.2" fill="#c88a2c"/><rect x="43.15" y="48.10" width="1.25" height="1" fill="#fbd978"/><rect x="45.45" y="48.05" width="1.05" height="1.05" fill="#d89028"/><rect x="47.55" y="48.00" width="1.6" height="1.2" fill="#c88a2c"/><rect x="48.05" y="48.10" width="1.25" height="1" fill="#fff8d8"/><rect x="50.35" y="48.05" width="1.05" height="1.05" fill="#d89028"/><rect x="52.45" y="48.00" width="1.6" height="1.2" fill="#c88a2c"/><rect x="52.95" y="48.10" width="1.25" height="1" fill="#fff8d8"/><rect x="55.45" y="47.70" width="0.8" height="1.7" fill="#9a9284"/><rect x="57.35" y="48.00" width="1.6" height="1.2" fill="#c88a2c"/><rect x="57.85" y="48.10" width="1.25" height="1" fill="#fff2b4"/><rect x="60.15" y="48.05" width="1.05" height="1.05" fill="#c88428"/><rect x="62.25" y="48.00" width="1.6" height="1.2" fill="#c88a2c"/><rect x="62.75" y="48.10" width="1.25" height="1" fill="#fbd978"/><rect x="65.25" y="47.70" width="0.8" height="1.7" fill="#9a9284"/><rect x="67.15" y="48.00" width="1.6" height="1.2" fill="#c88a2c"/><rect x="67.65" y="48.10" width="1.25" height="1" fill="#fbd978"/><rect x="70.00" y="48.05" width="1.1" height="1.1" fill="#ffffff"/><rect x="72.05" y="48.00" width="1.6" height="1.2" fill="#c88a2c"/><rect x="72.55" y="48.10" width="1.25" height="1" fill="#ffe890"/><rect x="75.05" y="47.70" width="0.8" height="1.7" fill="#9a9284"/><rect x="76.95" y="48.00" width="1.6" height="1.2" fill="#c88a2c"/><rect x="77.45" y="48.10" width="1.25" height="1" fill="#fbd978"/><rect x="79.95" y="47.70" width="0.8" height="1.7" fill="#9a9284"/><rect x="81.85" y="48.00" width="1.6" height="1.2" fill="#c88a2c"/><rect x="82.35" y="48.10" width="1.25" height="1" fill="#fff2b4"/><rect x="23.60" y="50.00" width="0.8" height="1.7" fill="#9a9284"/><rect x="25.50" y="50.30" width="1.6" height="1.2" fill="#c88a2c"/><rect x="26.00" y="50.40" width="1.25" height="1" fill="#fff2b4"/><rect x="28.30" y="50.35" width="1.05" height="1.05" fill="#e8a234"/><rect x="30.40" y="50.30" width="1.6" height="1.2" fill="#c88a2c"/><rect x="30.90" y="50.40" width="1.25" height="1" fill="#ffe890"/><rect x="33.40" y="50.00" width="0.8" height="1.7" fill="#9a9284"/><rect x="35.30" y="50.30" width="1.6" height="1.2" fill="#c88a2c"/><rect x="35.80" y="50.40" width="1.25" height="1" fill="#fbd978"/><rect x="38.30" y="50.00" width="0.8" height="1.7" fill="#9a9284"/><rect x="40.20" y="50.30" width="1.6" height="1.2" fill="#c88a2c"/><rect x="40.70" y="50.40" width="1.25" height="1" fill="#fff8d8"/><rect x="43.20" y="50.00" width="0.8" height="1.7" fill="#9a9284"/><rect x="45.10" y="50.30" width="1.6" height="1.2" fill="#c88a2c"/><rect x="45.60" y="50.40" width="1.25" height="1" fill="#fff2b4"/><rect x="47.90" y="50.35" width="1.05" height="1.05" fill="#d89028"/><rect x="50.00" y="50.30" width="1.6" height="1.2" fill="#c88a2c"/><rect x="50.50" y="50.40" width="1.25" height="1" fill="#fff2b4"/><rect x="53.00" y="50.00" width="0.8" height="1.7" fill="#9a9284"/><rect x="54.90" y="50.30" width="1.6" height="1.2" fill="#c88a2c"/><rect x="55.40" y="50.40" width="1.25" height="1" fill="#ffe890"/><rect x="57.70" y="50.35" width="1.05" height="1.05" fill="#c88428"/><rect x="59.80" y="50.30" width="1.6" height="1.2" fill="#c88a2c"/><rect x="60.30" y="50.40" width="1.25" height="1" fill="#fbd978"/><rect x="62.80" y="50.00" width="0.8" height="1.7" fill="#9a9284"/><rect x="64.70" y="50.30" width="1.6" height="1.2" fill="#c88a2c"/><rect x="65.20" y="50.40" width="1.25" height="1" fill="#fff2b4"/><rect x="67.70" y="50.00" width="0.8" height="1.7" fill="#9a9284"/><rect x="69.60" y="50.30" width="1.6" height="1.2" fill="#c88a2c"/><rect x="70.10" y="50.40" width="1.25" height="1" fill="#fff2b4"/><rect x="72.60" y="50.00" width="0.8" height="1.7" fill="#9a9284"/><rect x="74.50" y="50.30" width="1.6" height="1.2" fill="#c88a2c"/><rect x="75.00" y="50.40" width="1.25" height="1" fill="#fff8d8"/><rect x="77.35" y="50.35" width="1.1" height="1.1" fill="#ffffff"/><rect x="79.40" y="50.30" width="1.6" height="1.2" fill="#c88a2c"/><rect x="79.90" y="50.40" width="1.25" height="1" fill="#ffe890"/><rect x="82.40" y="50.00" width="0.8" height="1.7" fill="#9a9284"/><rect x="23.05" y="52.90" width="1.6" height="1.2" fill="#c88a2c"/><rect x="23.55" y="53.00" width="1.25" height="1" fill="#ffe890"/><rect x="25.85" y="52.95" width="1.05" height="1.05" fill="#f0b648"/><rect x="27.95" y="52.90" width="1.6" height="1.2" fill="#c88a2c"/><rect x="28.45" y="53.00" width="1.25" height="1" fill="#fff8d8"/><rect x="30.75" y="52.95" width="1.05" height="1.05" fill="#e8a234"/><rect x="32.85" y="52.90" width="1.6" height="1.2" fill="#c88a2c"/><rect x="33.35" y="53.00" width="1.25" height="1" fill="#fbd978"/><rect x="35.70" y="52.95" width="1.1" height="1.1" fill="#ffffff"/><rect x="37.75" y="52.90" width="1.6" height="1.2" fill="#c88a2c"/><rect x="38.25" y="53.00" width="1.25" height="1" fill="#fff8d8"/><rect x="40.55" y="52.95" width="1.05" height="1.05" fill="#d89028"/><rect x="42.65" y="52.90" width="1.6" height="1.2" fill="#c88a2c"/><rect x="43.15" y="53.00" width="1.25" height="1" fill="#fff2b4"/><rect x="45.50" y="52.95" width="1.1" height="1.1" fill="#ffffff"/><rect x="47.55" y="52.90" width="1.6" height="1.2" fill="#c88a2c"/><rect x="48.05" y="53.00" width="1.25" height="1" fill="#fff2b4"/><rect x="50.35" y="52.95" width="1.05" height="1.05" fill="#d89028"/><rect x="52.45" y="52.90" width="1.6" height="1.2" fill="#c88a2c"/><rect x="52.95" y="53.00" width="1.25" height="1" fill="#fff8d8"/><rect x="55.25" y="52.95" width="1.05" height="1.05" fill="#e8a234"/><rect x="57.35" y="52.90" width="1.6" height="1.2" fill="#c88a2c"/><rect x="57.85" y="53.00" width="1.25" height="1" fill="#fbd978"/><rect x="60.15" y="52.95" width="1.05" height="1.05" fill="#c88428"/><rect x="62.25" y="52.90" width="1.6" height="1.2" fill="#c88a2c"/><rect x="62.75" y="53.00" width="1.25" height="1" fill="#fff2b4"/><rect x="65.10" y="52.95" width="1.1" height="1.1" fill="#ffffff"/><rect x="67.15" y="52.90" width="1.6" height="1.2" fill="#c88a2c"/><rect x="67.65" y="53.00" width="1.25" height="1" fill="#ffe890"/><rect x="70.15" y="52.60" width="0.8" height="1.7" fill="#9a9284"/><rect x="72.05" y="52.90" width="1.6" height="1.2" fill="#c88a2c"/><rect x="72.55" y="53.00" width="1.25" height="1" fill="#fff8d8"/><rect x="74.85" y="52.95" width="1.05" height="1.05" fill="#e8a234"/><rect x="76.95" y="52.90" width="1.6" height="1.2" fill="#c88a2c"/><rect x="77.45" y="53.00" width="1.25" height="1" fill="#ffe890"/><rect x="79.75" y="52.95" width="1.05" height="1.05" fill="#c88428"/><rect x="81.85" y="52.90" width="1.6" height="1.2" fill="#c88a2c"/><rect x="82.35" y="53.00" width="1.25" height="1" fill="#fff8d8"/><rect x="23.60" y="54.70" width="0.8" height="1.7" fill="#9a9284"/><rect x="25.50" y="55.00" width="1.6" height="1.2" fill="#c88a2c"/><rect x="26.00" y="55.10" width="1.25" height="1" fill="#fbd978"/><rect x="28.35" y="55.05" width="1.1" height="1.1" fill="#ffffff"/><rect x="30.40" y="55.00" width="1.6" height="1.2" fill="#c88a2c"/><rect x="30.90" y="55.10" width="1.25" height="1" fill="#ffe890"/><rect x="33.20" y="55.05" width="1.05" height="1.05" fill="#d89028"/><rect x="35.30" y="55.00" width="1.6" height="1.2" fill="#c88a2c"/><rect x="35.80" y="55.10" width="1.25" height="1" fill="#fff8d8"/><rect x="38.30" y="54.70" width="0.8" height="1.7" fill="#9a9284"/><rect x="40.20" y="55.00" width="1.6" height="1.2" fill="#c88a2c"/><rect x="40.70" y="55.10" width="1.25" height="1" fill="#ffe890"/><rect x="43.20" y="54.70" width="0.8" height="1.7" fill="#9a9284"/><rect x="45.10" y="55.00" width="1.6" height="1.2" fill="#c88a2c"/><rect x="45.60" y="55.10" width="1.25" height="1" fill="#fbd978"/><rect x="47.90" y="55.05" width="1.05" height="1.05" fill="#d89028"/><rect x="50.00" y="55.00" width="1.6" height="1.2" fill="#c88a2c"/><rect x="50.50" y="55.10" width="1.25" height="1" fill="#fbd978"/><rect x="53.00" y="54.70" width="0.8" height="1.7" fill="#9a9284"/><rect x="54.90" y="55.00" width="1.6" height="1.2" fill="#c88a2c"/><rect x="55.40" y="55.10" width="1.25" height="1" fill="#fff8d8"/><rect x="57.90" y="54.70" width="0.8" height="1.7" fill="#9a9284"/><rect x="59.80" y="55.00" width="1.6" height="1.2" fill="#c88a2c"/><rect x="60.30" y="55.10" width="1.25" height="1" fill="#fff8d8"/><rect x="62.65" y="55.05" width="1.1" height="1.1" fill="#ffffff"/><rect x="64.70" y="55.00" width="1.6" height="1.2" fill="#c88a2c"/><rect x="65.20" y="55.10" width="1.25" height="1" fill="#ffe890"/><rect x="67.70" y="54.70" width="0.8" height="1.7" fill="#9a9284"/><rect x="69.60" y="55.00" width="1.6" height="1.2" fill="#c88a2c"/><rect x="70.10" y="55.10" width="1.25" height="1" fill="#fff8d8"/><rect x="72.60" y="54.70" width="0.8" height="1.7" fill="#9a9284"/><rect x="74.50" y="55.00" width="1.6" height="1.2" fill="#c88a2c"/><rect x="75.00" y="55.10" width="1.25" height="1" fill="#fbd978"/><rect x="77.50" y="54.70" width="0.8" height="1.7" fill="#9a9284"/><rect x="79.40" y="55.00" width="1.6" height="1.2" fill="#c88a2c"/><rect x="79.90" y="55.10" width="1.25" height="1" fill="#fbd978"/><rect x="82.20" y="55.05" width="1.05" height="1.05" fill="#c88428"/></g>
<rect x="1" y="57" width="83.3" height="1" fill="#d88c22"/>
<path d="M50.5 20.2L61 30.6L50.5 41L40 30.6Z" fill="#614538"/>
<rect x="28.9" y="23.5" width="8" height="13.2" fill="#5e4134"/>
<rect x="65.3" y="26.7" width="11.8" height="12.8" fill="#5a3f31"/>
<rect x="70.7" y="40.4" width="5.3" height="4.9" fill="#4e372b"/>
<rect x="14.5" y="4.5" width="5" height="3.4" fill="#5a3d2e"/>
<rect x="31.5" y="13.2" width="6" height="3.6" fill="#5a3d2e"/>
<rect x="20.2" y="33.2" width="5" height="4.6" fill="#6a4a3b"/>
<rect x="64" y="26.2" width="1" height="13" fill="#8a8a8a"/>
<rect x="58" y="24" width="3" height="2" fill="#7a5540"/>
<circle cx="16.4" cy="14.8" r="2.7" fill="#808080"/>
<rect x="18.6" y="24.2" width="5.9" height="5.8" rx="1.6" fill="#808080"/>
<circle cx="6.7" cy="36.7" r="3.1" fill="#7c7c7c"/>
<circle cx="16.4" cy="51.5" r="2.9" fill="#7c7c7c"/>
<circle cx="6" cy="45" r="1.8" fill="#7a6a58"/>
<g fill="#fff">
<path d="M25.3 12.8l1.6 1.8-1.6 1.8-1.6-1.8z"/><path d="M80 12.6l1.7 1.8-1.7 1.8-1.7-1.8z"/><path d="M25 41.6l1.6 1.8-1.6 1.8-1.6-1.8z"/><path d="M80.4 41.6l1.7 1.8-1.7 1.8-1.7-1.8z"/><path d="M19 33.6l1.3 1.6-1.3 1.6-1.3-1.6z"/>
<rect x="31.5" y="39.6" width="4" height="1.6"/><rect x="50" y="42.4" width="8" height="1.6"/><rect x="65" y="26" width="9" height="0.9" fill="#d8d8d8"/>
</g>
<rect x="80.6" y="31.2" width="5.2" height="6.6" rx="1" fill="#dcdcdc"/>
<g fill="#e39a34">
<rect x="21.4" y="18.4" width="3.2" height="2.2"/><rect x="11" y="43" width="2.6" height="2.6"/><rect x="18" y="43" width="2.8" height="2.8"/><rect x="59" y="17.6" width="2.4" height="2"/><rect x="70" y="17.4" width="2.2" height="2.4"/><rect x="74.5" y="21.5" width="3" height="2.6"/><rect x="62" y="39.6" width="4.6" height="1.6"/><rect x="3.4" y="28.6" width="3" height="2.8" fill="#9a6a34"/><rect x="5.6" y="16.8" width="1" height="1.6"/>
</g>
<g fill="#3355aa"><rect x="31.6" y="30.8" width="1.1" height="1.1"/><rect x="45.8" y="29" width="1.1" height="1.1"/><rect x="50.8" y="35.8" width="1.1" height="1.1"/></g>
</svg>


<!-- scrollbar -->
<div class="abs" style="left:32px;top:559px;width:1022px;height:1px;background:#ececec;"></div>
<div class="abs" style="left:32px;top:560px;width:1022px;height:12px;background:#fafafa;"></div>
<div class="abs" style="left:32px;top:572px;width:1022px;height:1px;background:#e6e6e6;"></div>
<div class="abs" style="left:49px;top:562px;width:203px;height:8px;border-radius:4px;background:#c1c1c1;"></div>
<svg class="abs" style="left:35px;top:561px" width="10" height="12" viewBox="0 0 10 12"><path d="M7.3 1.6L2.8 6L7.3 10.4" stroke="#555" stroke-width="2.1" fill="none"/></svg>
<svg class="abs" style="left:1043px;top:561px" width="10" height="12" viewBox="0 0 10 12"><path d="M2.7 1.6L7.2 6L2.7 10.4" stroke="#555" stroke-width="2.1" fill="none"/></svg>

<!-- refresh -->
<div class="btn" style="left:30px;top:582px;width:72px;letter-spacing:0.25px;">Refresh</div>
<div class="t" style="left:110px;top:589px;letter-spacing:0.12px;">Catalog was last updated on 12/05/2025 6:09:07 PM</div>

<!-- footer -->
<div class="abs" style="left:1px;top:625px;width:1084px;height:1px;background:#e2e2e2;"></div>
<div class="abs" style="left:21px;top:646px;width:21px;height:21px;border:1px solid #5c5c5c;border-radius:50%;background:#fff;"></div>
<div class="t b" style="left:28.5px;top:650px;font-size:14px;line-height:16px;height:16px;color:#1d3f9c;">?</div>
<div class="btn" style="left:687px;top:646px;width:73px;">&lt; <u>B</u>ack</div>
<div class="btn" style="left:788px;top:646px;width:55px;padding-left:20px;text-align:left;border:none;height:26px;line-height:28px;letter-spacing:-0.25px;background:#4a78cc;color:#fff;"><u>N</u>ext &gt;</div>
<div class="btn" style="left:889px;top:646px;width:73px;border-color:#b9b9b9;color:#a2a2a2;letter-spacing:0.25px;"><u>F</u>inish</div>
<div class="btn" style="left:990px;top:646px;width:73px;letter-spacing:0.25px;">Cancel</div>


</div></div>
<div style="position:absolute;left:0;top:27px;width:1px;height:176px;background:#6c6c6c;"></div>
</body>
</html>
